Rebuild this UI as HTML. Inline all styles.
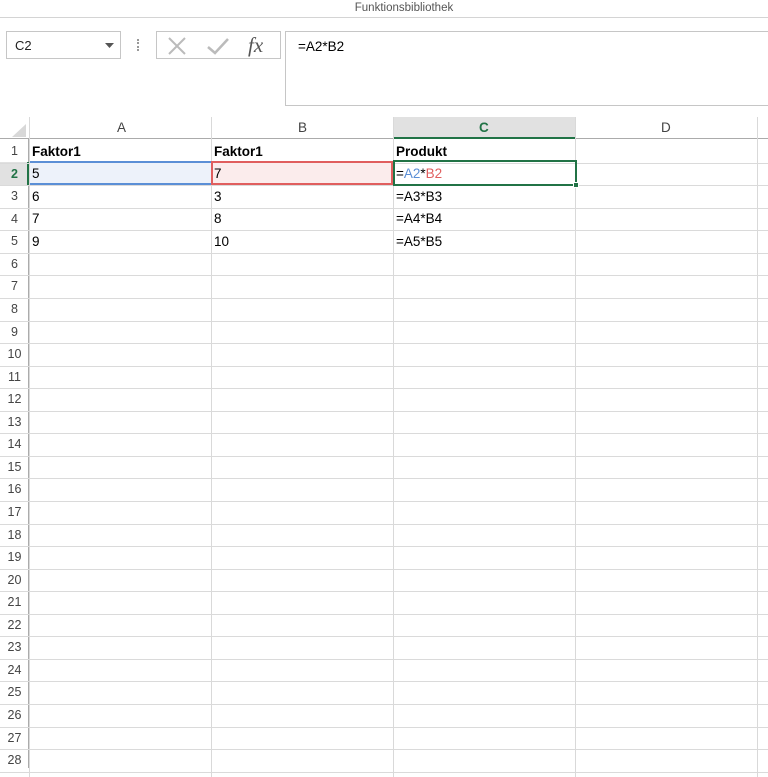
<!DOCTYPE html>
<html><head><style>
*{margin:0;padding:0;box-sizing:border-box}
body{width:768px;height:768px;overflow:hidden;background:#fff;font-family:"Liberation Sans",sans-serif;position:relative}
.a{position:absolute}
.t{font-size:13.5px;color:#000;position:absolute;white-space:nowrap}
</style></head><body>
<div class="a" style="left:0;top:0;width:768px;height:18px;border-bottom:1px solid #d4d4d4;text-align:center;font-size:11.5px;color:#555;padding-top:2px;padding-left:40px">Funktionsbibliothek</div>
<div class="a" style="left:6px;top:31px;width:115px;height:28px;border:1px solid #c6c6c6;font-size:13px;padding:6px 0 0 8px;color:#222">C2
<svg class="a" style="left:98px;top:11px" width="9" height="5"><path d="M0 0H9L4.5 5Z" fill="#555"/></svg></div>
<div class="a" style="left:137px;top:39px;width:2px;height:12px;border-left:2px dotted #999"></div>
<div class="a" style="left:156px;top:31px;width:125px;height:28px;border:1px solid #c6c6c6">
<svg class="a" style="left:10px;top:5px" width="20" height="18"><path d="M2 1L18 17M18 1L2 17" stroke="#bbb" stroke-width="2"/></svg>
<svg class="a" style="left:49px;top:5px" width="24" height="18"><path d="M2 10L9 16L22 2" stroke="#bbb" stroke-width="2.5" fill="none"/></svg>
<span class="a" style="left:91px;top:1px;font-family:'Liberation Serif',serif;font-style:italic;font-size:21px;color:#555">fx</span></div>
<div class="a" style="left:285px;top:31px;width:490px;height:75px;border:1px solid #c6c6c6;font-size:13.5px;padding:7px 0 0 12px">=A2*B2</div>
<div class="a" style="left:0;top:117px;width:768px;height:22px;background:#fff;border-bottom:1px solid #ababab"></div>
<svg class="a" style="left:12px;top:124px" width="14" height="13"><path d="M14 0V13H0Z" fill="#d8d8d8"/></svg>
<div class="a" style="left:393px;top:117px;width:182px;height:22px;background:#e1e1e1;border-bottom:2px solid #217346"></div>
<div class="t" style="left:117px;top:120px;color:#444">A</div>
<div class="t" style="left:298px;top:120px;color:#444">B</div>
<div class="t" style="left:479px;top:120px;color:#217346;font-weight:bold">C</div>
<div class="t" style="left:661px;top:120px;color:#444">D</div>
<div class="a" style="left:0;top:139px;width:29px;height:629px;border-right:1px solid #ababab"></div>
<div class="a" style="left:0;top:162px;width:29px;height:23px;background:#e1e1e1;border-right:2px solid #217346"></div>
<div id="g"></div>
<script>
var h='',top0=140,rh=22.56;
for(var x of [29,211,393,575,757])h+='<div class="a" style="left:'+x+'px;top:117px;width:1px;height:660px;background:#d9d9d9"></div>';
for(var i=1;i<=28;i++){var y=top0+(i-1)*rh;
h+='<div class="a" style="left:0;top:'+(y+rh).toFixed(1)+'px;width:768px;height:1px;background:#dadada"></div>';
h+='<div class="t" style="left:0;width:29px;text-align:center;top:'+(y+4).toFixed(1)+'px;font-size:12.5px;color:'+(i==2?'#217346;font-weight:bold':'#444')+'">'+i+'</div>';}
document.getElementById('g').innerHTML=h;
</script>
<div class="a" style="left:30px;top:161px;width:181px;height:24px;background:#edf2fa;border-top:2px solid #5b8fd6;border-bottom:2px solid #5b8fd6"></div>
<div class="a" style="left:211px;top:161px;width:182px;height:24px;background:#fbecec;border:2px solid #e05e5e"></div>
<div class="a" style="left:393px;top:160px;width:184px;height:26px;border:2px solid #217346"></div>
<div class="a" style="left:573px;top:182px;width:6px;height:6px;background:#217346;border:1px solid #fff"></div>
<div class="t" style="left:32px;top:144px;font-weight:bold">Faktor1</div>
<div class="t" style="left:214px;top:144px;font-weight:bold">Faktor1</div>
<div class="t" style="left:396px;top:144px;font-weight:bold">Produkt</div>
<div class="t" style="left:32px;top:166px">5</div><div class="t" style="left:214px;top:166px">7</div>
<div class="t" style="left:396px;top:166px">=<span style="color:#5b8fd6">A2</span>*<span style="color:#e05e5e">B2</span></div>
<div class="t" style="left:32px;top:189px">6</div><div class="t" style="left:214px;top:189px">3</div><div class="t" style="left:396px;top:189px">=A3*B3</div>
<div class="t" style="left:32px;top:211px">7</div><div class="t" style="left:214px;top:211px">8</div><div class="t" style="left:396px;top:211px">=A4*B4</div>
<div class="t" style="left:32px;top:234px">9</div><div class="t" style="left:214px;top:234px">10</div><div class="t" style="left:396px;top:234px">=A5*B5</div>
</body></html>
